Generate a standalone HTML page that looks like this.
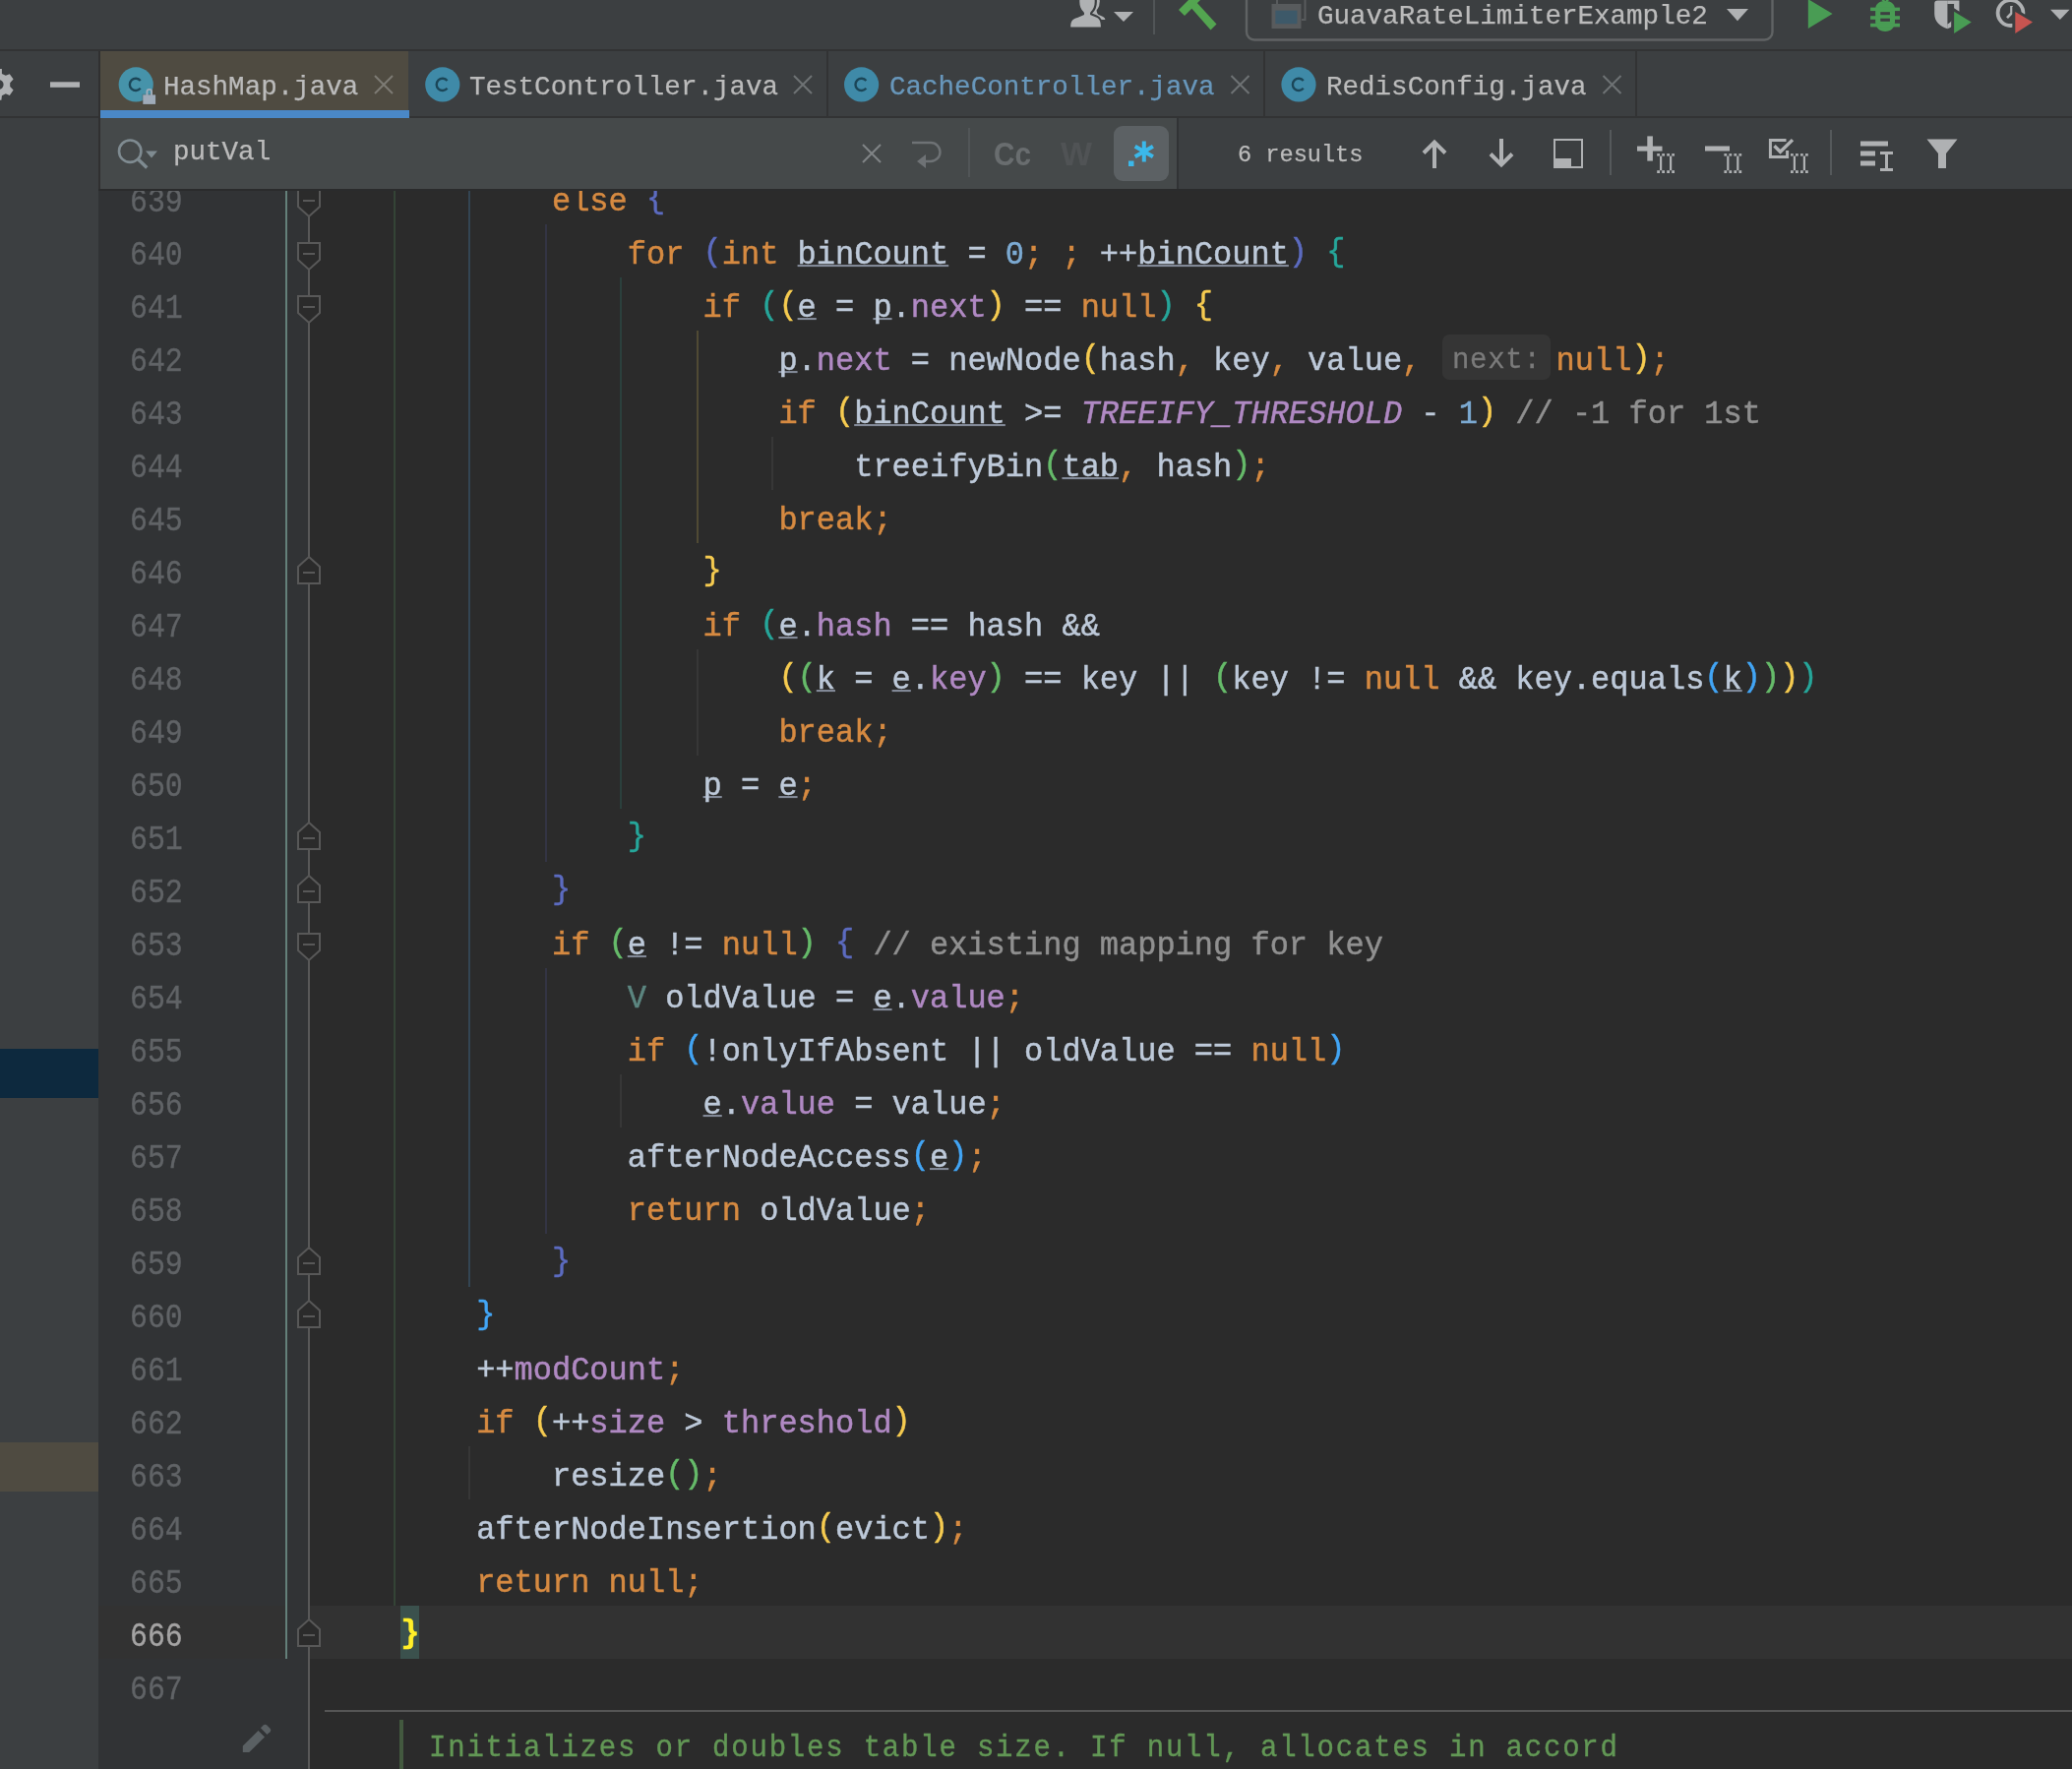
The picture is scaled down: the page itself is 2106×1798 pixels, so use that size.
<!DOCTYPE html>
<html>
<head>
<meta charset="utf-8">
<title>HashMap.java</title>
<style>
html,body{margin:0;padding:0;}
html{width:2106px;height:1798px;overflow:hidden;background:#2b2b2b;}
body{width:2106px;height:1798px;overflow:hidden;background:#2b2b2b;position:relative;font-family:"Liberation Mono",monospace;}
#root{position:absolute;left:0;top:0;width:2106px;height:1798px;overflow:hidden;contain:paint;}
.abs{position:absolute;}
/* ---------- chrome ---------- */
#toolbar{left:0;top:0;width:2106px;height:50px;background:#3c3f41;}
#tb-line{left:0;top:50px;width:2106px;height:2px;background:#323334;}
#tabs{left:0;top:52px;width:2106px;height:66px;background:#3c3f41;}
#tabs-line{left:0;top:118px;width:2106px;height:2px;background:#323334;}
#side{left:0;top:120px;width:100px;height:1678px;background:#3c3f41;}
#side-vline{left:100px;top:52px;width:2px;height:142px;background:#303031;}
#searchrow{left:102px;top:120px;width:2004px;height:72px;background:#3c3f41;}
#searchfield{left:102px;top:120px;width:1094px;height:72px;background:#45494a;}
#search-vline{left:1196px;top:120px;width:2px;height:72px;background:#313335;}
#search-bottom{left:100px;top:192px;width:2006px;height:2px;background:#2a2b2c;}
.tabsep{top:52px;width:2px;height:66px;background:#323334;}
#acttab{left:102px;top:52px;width:313px;height:60px;background:#4f4b41;}
#actline{left:102px;top:112px;width:314px;height:8px;background:#4a88c7;}
.ui{font-family:"Liberation Mono",monospace;font-size:27.55px;white-space:pre;color:#bbbbbb;line-height:30px;height:30px;will-change:transform;-webkit-text-stroke:0.25px;}
/* ---------- editor ---------- */
#gutter{left:100px;top:194px;width:214px;height:1604px;background:#313335;}
#caretrow{left:314px;top:1632px;width:1792px;height:54px;background:#323232;}
#caretgut{left:100px;top:1632px;width:190px;height:54px;background:#323232;}
#tealline{left:290px;top:194px;width:2px;height:1492px;background:#64807a;}
#foldline{left:313px;top:194px;width:2px;height:1604px;background:#585858;}
.guide{position:absolute;width:2px;}
.folds{position:absolute;left:0;top:0;}
#code,#nums{position:absolute;left:0;top:0;width:2106px;height:1798px;}
.ln{position:absolute;left:330.5px;height:54px;line-height:54px;font-size:32px;white-space:pre;color:#bdc9d9;transform-origin:0 35.5px;transform:translateY(5px) scaleY(1.04);-webkit-text-stroke:0.45px;}
.ln>span, .num{display:inline-block;}
.lnin{display:inline-block;}
.num{position:absolute;left:132px;height:54px;line-height:54px;font-size:29.9px;color:#606366;white-space:pre;transform-origin:0 35px;transform:translateY(6px) scaleY(1.17);-webkit-text-stroke:0.3px;}
.num.cur{color:#a4a3a3;}
.k{color:#d68a41}.t{color:#bdc9d9}.f{color:#b089c3}.n{color:#7caad2}.c{color:#909090}
.i{color:#b089c3;font-style:italic}.tp{color:#5c8680}
.u{color:#bdc9d9;text-decoration:underline;text-decoration-color:#838a98;text-decoration-thickness:2px;text-underline-offset:1px;text-decoration-skip-ink:none;}
.b-ind,.b-teal,.b-yel,.b-grn,.b-blu,.b-match{position:relative;top:-3px}
.b-ind{color:#5c6bc0}.b-teal{color:#26a69a}.b-yel{color:#f6cb50}.b-grn{color:#66bb6a}.b-blu{color:#42a5f5}
.b-match{color:#ffef28;font-weight:bold;}
#matchbg{left:407.3px;top:1632px;width:18.7px;height:54px;background:#3b514d;}
.hint{display:inline-block;width:118.1px;height:10px;}
#hintbox{left:1466px;top:340px;width:109.5px;height:45.5px;border-radius:7px;background:#353535;}
#hinttext{left:1475.8px;top:340px;letter-spacing:0.7px;height:54px;line-height:54px;font-size:29px;color:#7a7a7a;white-space:pre;-webkit-text-stroke:0.3px;will-change:transform;}
#docsep{left:330px;top:1738px;width:1776px;height:2px;background:#555555;}
#docbar{left:406px;top:1748px;width:4px;height:50px;background:#43593f;}
#doctext{left:436px;top:1751px;font-size:29px;letter-spacing:1.8px;line-height:54px;height:54px;color:#629755;white-space:pre;-webkit-text-stroke:0.35px;transform-origin:0 35px;transform:scaleY(1.1);}
</style>
</head>
<body>
<div id="root">
<!-- editor -->
<div id="gutter" class="abs"></div>
<div id="caretrow" class="abs"></div>
<div id="caretgut" class="abs"></div>
<div id="matchbg" class="abs"></div>
<div id="tealline" class="abs"></div>
<div id="foldline" class="abs"></div>
<div class="guide" style="left:400px;top:194px;height:1438px;background:#344436"></div>
<div class="guide" style="left:476px;top:194px;height:1114px;background:#334553"></div>
<div class="guide" style="left:554px;top:228px;height:648px;background:#333444"></div>
<div class="guide" style="left:554px;top:984px;height:270px;background:#333444"></div>
<div class="guide" style="left:630px;top:282px;height:540px;background:#2b403d"></div>
<div class="guide" style="left:630px;top:1092px;height:54px;background:#373737"></div>
<div class="guide" style="left:708px;top:336px;height:216px;background:#504a34"></div>
<div class="guide" style="left:708px;top:660px;height:108px;background:#373737"></div>
<div class="guide" style="left:784px;top:444px;height:54px;background:#373737"></div>
<div class="guide" style="left:476px;top:1470px;height:54px;background:#373737"></div>
<svg class="folds" width="2106" height="1798" viewBox="0 0 2106 1798"><g fill="#2b2b2b" stroke="#585858" stroke-width="2"><path d="M303,193 H325 V210 L314,220 L303,210 Z"/><path d="M308,204 H320"/><path d="M303,247 H325 V264 L314,274 L303,264 Z"/><path d="M308,258 H320"/><path d="M303,301 H325 V318 L314,328 L303,318 Z"/><path d="M308,312 H320"/><path d="M303,949 H325 V966 L314,976 L303,966 Z"/><path d="M308,960 H320"/><path d="M314,566 L325,576 V593 H303 V576 Z"/><path d="M308,582 H320"/><path d="M314,836 L325,846 V863 H303 V846 Z"/><path d="M308,852 H320"/><path d="M314,890 L325,900 V917 H303 V900 Z"/><path d="M308,906 H320"/><path d="M314,1268 L325,1278 V1295 H303 V1278 Z"/><path d="M308,1284 H320"/><path d="M314,1322 L325,1332 V1349 H303 V1332 Z"/><path d="M308,1338 H320"/><path d="M314,1646 L325,1656 V1673 H303 V1656 Z"/><path d="M308,1662 H320"/></g></svg>
<div id="hintbox" class="abs"></div>
<div id="hinttext" class="abs">next:</div>
<div id="nums">
<div class="num" style="top:174px">639</div>
<div class="num" style="top:228px">640</div>
<div class="num" style="top:282px">641</div>
<div class="num" style="top:336px">642</div>
<div class="num" style="top:390px">643</div>
<div class="num" style="top:444px">644</div>
<div class="num" style="top:498px">645</div>
<div class="num" style="top:552px">646</div>
<div class="num" style="top:606px">647</div>
<div class="num" style="top:660px">648</div>
<div class="num" style="top:714px">649</div>
<div class="num" style="top:768px">650</div>
<div class="num" style="top:822px">651</div>
<div class="num" style="top:876px">652</div>
<div class="num" style="top:930px">653</div>
<div class="num" style="top:984px">654</div>
<div class="num" style="top:1038px">655</div>
<div class="num" style="top:1092px">656</div>
<div class="num" style="top:1146px">657</div>
<div class="num" style="top:1200px">658</div>
<div class="num" style="top:1254px">659</div>
<div class="num" style="top:1308px">660</div>
<div class="num" style="top:1362px">661</div>
<div class="num" style="top:1416px">662</div>
<div class="num" style="top:1470px">663</div>
<div class="num" style="top:1524px">664</div>
<div class="num" style="top:1578px">665</div>
<div class="num cur" style="top:1632px">666</div>
<div class="num" style="top:1686px">667</div>
</div>
<div id="code">
<div class="ln" style="top:174px">            <span class="k">else</span><span class="t"> </span><span class="b-ind">{</span></div>
<div class="ln" style="top:228px">                <span class="k">for</span><span class="t"> </span><span class="b-ind">(</span><span class="k">int</span><span class="t"> </span><span class="u">binCount</span><span class="t"> = </span><span class="n">0</span><span class="k">;</span><span class="t"> </span><span class="k">;</span><span class="t"> ++</span><span class="u">binCount</span><span class="b-ind">)</span><span class="t"> </span><span class="b-teal">{</span></div>
<div class="ln" style="top:282px">                    <span class="k">if</span><span class="t"> </span><span class="b-teal">(</span><span class="b-yel">(</span><span class="u">e</span><span class="t"> = </span><span class="u">p</span><span class="t">.</span><span class="f">next</span><span class="b-yel">)</span><span class="t"> == </span><span class="k">null</span><span class="b-teal">)</span><span class="t"> </span><span class="b-yel">{</span></div>
<div class="ln" style="top:336px">                        <span class="u">p</span><span class="t">.</span><span class="f">next</span><span class="t"> = newNode</span><span class="b-yel">(</span><span class="t">hash</span><span class="k">,</span><span class="t"> key</span><span class="k">,</span><span class="t"> value</span><span class="k">,</span><span class="t"> </span><span class="hint"></span><span class="k">null</span><span class="b-yel">)</span><span class="k">;</span></div>
<div class="ln" style="top:390px">                        <span class="k">if</span><span class="t"> </span><span class="b-yel">(</span><span class="u">binCount</span><span class="t"> &gt;= </span><span class="i">TREEIFY_THRESHOLD</span><span class="t"> - </span><span class="n">1</span><span class="b-yel">)</span><span class="t"> </span><span class="c">// -1 for 1st</span></div>
<div class="ln" style="top:444px">                            <span class="t">treeifyBin</span><span class="b-grn">(</span><span class="u">tab</span><span class="k">,</span><span class="t"> hash</span><span class="b-grn">)</span><span class="k">;</span></div>
<div class="ln" style="top:498px">                        <span class="k">break</span><span class="k">;</span></div>
<div class="ln" style="top:552px">                    <span class="b-yel">}</span></div>
<div class="ln" style="top:606px">                    <span class="k">if</span><span class="t"> </span><span class="b-teal">(</span><span class="u">e</span><span class="t">.</span><span class="f">hash</span><span class="t"> == hash &amp;&amp;</span></div>
<div class="ln" style="top:660px">                        <span class="b-yel">(</span><span class="b-grn">(</span><span class="u">k</span><span class="t"> = </span><span class="u">e</span><span class="t">.</span><span class="f">key</span><span class="b-grn">)</span><span class="t"> == key || </span><span class="b-grn">(</span><span class="t">key != </span><span class="k">null</span><span class="t"> &amp;&amp; key.equals</span><span class="b-blu">(</span><span class="u">k</span><span class="b-blu">)</span><span class="b-grn">)</span><span class="b-yel">)</span><span class="b-teal">)</span></div>
<div class="ln" style="top:714px">                        <span class="k">break</span><span class="k">;</span></div>
<div class="ln" style="top:768px">                    <span class="u">p</span><span class="t"> = </span><span class="u">e</span><span class="k">;</span></div>
<div class="ln" style="top:822px">                <span class="b-teal">}</span></div>
<div class="ln" style="top:876px">            <span class="b-ind">}</span></div>
<div class="ln" style="top:930px">            <span class="k">if</span><span class="t"> </span><span class="b-grn">(</span><span class="u">e</span><span class="t"> != </span><span class="k">null</span><span class="b-grn">)</span><span class="t"> </span><span class="b-ind">{</span><span class="t"> </span><span class="c">// existing mapping for key</span></div>
<div class="ln" style="top:984px">                <span class="tp">V</span><span class="t"> oldValue = </span><span class="u">e</span><span class="t">.</span><span class="f">value</span><span class="k">;</span></div>
<div class="ln" style="top:1038px">                <span class="k">if</span><span class="t"> </span><span class="b-blu">(</span><span class="t">!onlyIfAbsent || oldValue == </span><span class="k">null</span><span class="b-blu">)</span></div>
<div class="ln" style="top:1092px">                    <span class="u">e</span><span class="t">.</span><span class="f">value</span><span class="t"> = value</span><span class="k">;</span></div>
<div class="ln" style="top:1146px">                <span class="t">afterNodeAccess</span><span class="b-blu">(</span><span class="u">e</span><span class="b-blu">)</span><span class="k">;</span></div>
<div class="ln" style="top:1200px">                <span class="k">return</span><span class="t"> oldValue</span><span class="k">;</span></div>
<div class="ln" style="top:1254px">            <span class="b-ind">}</span></div>
<div class="ln" style="top:1308px">        <span class="b-blu">}</span></div>
<div class="ln" style="top:1362px">        <span class="t">++</span><span class="f">modCount</span><span class="k">;</span></div>
<div class="ln" style="top:1416px">        <span class="k">if</span><span class="t"> </span><span class="b-yel">(</span><span class="t">++</span><span class="f">size</span><span class="t"> &gt; </span><span class="f">threshold</span><span class="b-yel">)</span></div>
<div class="ln" style="top:1470px">            <span class="t">resize</span><span class="b-grn">(</span><span class="b-grn">)</span><span class="k">;</span></div>
<div class="ln" style="top:1524px">        <span class="t">afterNodeInsertion</span><span class="b-yel">(</span><span class="t">evict</span><span class="b-yel">)</span><span class="k">;</span></div>
<div class="ln" style="top:1578px">        <span class="k">return</span><span class="t"> </span><span class="k">null</span><span class="k">;</span></div>
<div class="ln" style="top:1632px">    <span class="b-match">}</span></div>
<div class="ln" style="top:1686px"></div>
</div>
<div id="docsep" class="abs"></div>
<div id="docbar" class="abs"></div>
<svg class="abs" style="left:240px;top:1745px" width="44" height="44" viewBox="240 1745 44 44"><g fill="#5a6063"><path d="M246.8,1774.6 L262.5,1759 L269,1765.5 L253.3,1781 L246.8,1781 Z"/><path d="M264.9,1756.3 L267.7,1753.5 a2.500,2.500 0 0 1 3.500,0 L274.500,1756.8 a2.500,2.500 0 0 1 0,3.500 L271.4,1763.1 Z"/></g></svg>
<div id="doctext" class="abs">Initializes or doubles table size. If null, allocates in accord</div>

<!-- chrome backgrounds -->
<div id="toolbar" class="abs"></div>
<div id="tb-line" class="abs"></div>
<div id="tabs" class="abs"></div>
<div id="tabs-line" class="abs"></div>
<div id="side" class="abs"></div>
<div id="searchrow" class="abs"></div>
<div id="searchfield" class="abs"></div>
<div id="search-vline" class="abs"></div>
<div id="side-vline" class="abs"></div>
<div id="acttab" class="abs"></div>
<div id="actline" class="abs"></div>
<div class="abs tabsep" style="left:840px"></div>
<div class="abs tabsep" style="left:1284px"></div>
<div class="abs tabsep" style="left:1662px"></div>
<div class="abs" style="left:0;top:1066px;width:100px;height:50px;background:#0d293e"></div>
<div class="abs" style="left:0;top:1466px;width:100px;height:50px;background:#4f4b41"></div>

<div id="search-bottom" class="abs"></div>
<!-- search bar overlay (covers top of line 639) -->
<div id="overlay" class="abs" style="left:0;top:0;width:2106px;height:194px;overflow:hidden;pointer-events:none">
<svg class="abs" style="left:0;top:0" width="2106" height="194" viewBox="0 0 2106 194">
<!-- ===== top toolbar icons ===== -->
<g id="users">
  <g fill="#afb1b3">
    <ellipse cx="1110.500" cy="1.500" rx="7.300" ry="10.500"/>
    <path d="M1108,9 L1114.500,9 C1114.500,14 1116,15 1119,16 C1122.500,17.300 1123.300,18.500 1123.300,20 L1108,20 Z"/>
  </g>
  <g fill="#afb1b3" stroke="#3c3f41" stroke-width="4.400" paint-order="stroke">
    <path d="M1088.200,27.600 C1088.200,21.500 1090,19.500 1095,18 L1101.500,15.300 C1102.300,14.500 1102.300,13.500 1101.500,12.200 C1098.500,9.500 1097.300,6 1097.300,1.500 C1097.300,-5 1100.500,-9 1105,-9 C1109.500,-9 1112.700,-5 1112.700,1.500 C1112.700,6 1111.500,9.500 1108.500,12.200 C1107.700,13.500 1107.700,14.500 1108.500,15.300 L1114,17.500 C1117.500,19 1118.900,21.500 1118.900,27.600 Z"/>
  </g>
</g>
<path d="M1132,12 h20 l-10,10 z" fill="#afb1b3"/>
<rect x="1172" y="0" width="2" height="35" fill="#515557"/>
<g id="hammer" fill="#53a550">
  <path d="M1198,10 L1215,-7 L1221,-1 L1204,16 Z"/>
  <path d="M1209,6 L1214.500,0.500 L1236.500,24.500 L1230.500,30.500 Z"/>
</g>
<!-- run config box -->
<rect x="1267" y="-10" width="534.500" height="50.500" rx="8" ry="8" fill="none" stroke="#606364" stroke-width="2.400"/>
<g id="winicon">
  <path d="M1298,4 V-3 H1326.500 V20 H1323" fill="none" stroke="#585b5d" stroke-width="2"/>
  <rect x="1292.500" y="4" width="30" height="25" fill="#585b5d"/>
  <rect x="1296.400" y="10.700" width="22" height="13.500" fill="#3d5969"/>
</g>
<path d="M1755,8.900 h22 l-11,12.400 z" fill="#afb1b3"/>
<!-- run -->
<path d="M1837.800,-0.900 L1862.600,14 L1837.800,28.900 Z" fill="#499c54"/>
<!-- debug bug -->
<g id="bug" fill="#499c54">
  <path d="M1906.200,9.500 C1906.200,4 1910,1 1916.100,1 C1922.200,1 1926,4 1926,9.500 V22 C1926,28 1922,32 1916.100,32 C1910.200,32 1906.200,28 1906.200,22 Z"/>
  <rect x="1901.100" y="7.600" width="29.900" height="3.500"/>
  <rect x="1901.100" y="16.200" width="29.900" height="3.600"/>
  <rect x="1901.100" y="23.800" width="29.900" height="3.600"/>
  <path d="M1910.800,-2 l2.800,0 l2.600,3 l2.600,-3 l2.800,0 l-4,5 h-2.800 z"/>
</g>
<g fill="#3c3f41"><rect x="1911.300" y="12.200" width="9.600" height="3"/><rect x="1911.300" y="18.700" width="9.600" height="3.100"/></g>
<!-- coverage -->
<g id="cov">
  <path d="M1979.400,0.400 H1969.500 a3.300,3.300 0 0 0 -3.300,3.300 V14 C1966.200,22 1972,27 1979.400,29.300 Z" fill="#afb1b3"/>
  <path d="M1979.300,0.400 H1991.400 V14 C1991.400,22 1986,27 1979.300,29.300 Z M1979.300,4.100 H1986.100 V14 C1986.100,19 1983.500,22.500 1979.300,24.500 Z" fill="#afb1b3" fill-rule="evenodd"/>
  <path d="M1983.200,6.500 L2009,22.500 L1983.200,39 Z" fill="#3c3f41"/>
  <path d="M1986.100,11.700 L2003.800,22.500 L1986.100,33.900 Z" fill="#499c54"/>
</g>
<!-- profiler -->
<g id="prof">
  <circle cx="2043.500" cy="13.100" r="12.900" fill="none" stroke="#afb1b3" stroke-width="3.800"/>
  <path d="M2044.500,6 V13.400 L2040,18.200" fill="none" stroke="#afb1b3" stroke-width="2.700"/>
  <path d="M2045.400,6.800 L2071,22.600 L2045.400,39 Z" fill="#3c3f41"/>
  <path d="M2048.300,12 L2066,22.600 L2048.300,33.900 Z" fill="#c75450"/>
</g>
<path d="M2084,9.800 h19.600 l-9.800,10.200 z" fill="#afb1b3"/>

<!-- ===== left header ===== -->
<g id="gear" fill="#afb1b3">
  <path d="M-3,70 L1.9,70 L1.9,75 L5.8,76.7 L9.8,75.2 L13.6,80.4 L10.2,84.2 L10.2,87.9 L13.6,91.6 L9.8,96.9 L5.8,95.3 L1.9,97.2 L1.4,101.8 L-3,101.8 Z M-1.2,81.2 a4.8,4.8 0 0 1 0,9.6 a4.8,4.8 0 0 1 0,-9.6 z" fill-rule="evenodd"/>
</g>
<rect x="51" y="83.3" width="30" height="5.5" fill="#afb1b3"/>

<!-- ===== tab icons ===== -->
<g id="cicons">
  <circle cx="138.200" cy="85.950" r="17.600" fill="#4693aa"/>
  <circle cx="449.800" cy="85.900" r="17.600" fill="#3f8aa8"/>
  <circle cx="875.600" cy="85.900" r="17.600" fill="#3f8aa8"/>
  <circle cx="1320" cy="85.900" r="17.600" fill="#3f8aa8"/>
  <g fill="none" stroke="#1b4658" stroke-width="2.400">
    <path d="M142.71,81.95 a6.15,6.15 0 1 0 0,7.9"/>
    <path d="M454.56,81.95 a6.15,6.15 0 1 0 0,7.9"/>
    <path d="M880.36,81.95 a6.15,6.15 0 1 0 0,7.9"/>
    <path d="M1324.76,81.95 a6.15,6.15 0 1 0 0,7.9"/>
  </g>
  <!-- lock -->
  <rect x="144.600" y="95.700" width="14.200" height="10.900" fill="#4a4a44" opacity="0.5"/>
  <path d="M149.450,97 v-3.800 a2.300,2.300 0 0 1 4.600,0 v3.800" fill="none" stroke="#a2aebb" stroke-width="1.900"/>
  <rect x="145.300" y="96.400" width="12.800" height="9.500" fill="#9fabb9"/>
</g>
<!-- tab close X -->
<g stroke="#7d7b74" stroke-width="2" fill="none">
  <path d="M381,77 l18,18 M399,77 l-18,18"/>
</g>
<g stroke="#6e7274" stroke-width="2" fill="none">
  <path d="M807,77 l18,18 M825,77 l-18,18"/>
  <path d="M1251.5,77 l18,18 M1269.5,77 l-18,18"/>
  <path d="M1629.5,77 l18,18 M1647.5,77 l-18,18"/>
</g>

<!-- ===== search field ===== -->
<g fill="none" stroke="#7f8b91" stroke-width="2.6">
  <circle cx="132.2" cy="153.7" r="11.2"/>
  <path d="M140.500,162 L149.300,170.500" stroke-width="3.400"/>
</g>
<path d="M148,153.5 h12 l-6,7 z" fill="#7f8b91"/>
<g stroke="#808486" stroke-width="2" fill="none"><path d="M877,147 l18,18 M895,147 l-18,18"/></g>
<!-- newline icon -->
<g fill="none" stroke="#6e7275" stroke-width="2.4">
  <path d="M927,145 H946 a9.5,9.5 0 0 1 0,19 H940"/>
</g>
<path d="M941,157 v14 l-9,-7 z" fill="#6e7275"/>
<rect x="984" y="130" width="2" height="50" fill="#515557"/>
<!-- Cc / W -->
<text x="1010" y="168" font-family="Liberation Sans, sans-serif" font-weight="bold" font-size="33" fill="#696d6f" textLength="38" lengthAdjust="spacingAndGlyphs">Cc</text>
<text x="1078" y="168" font-family="Liberation Sans, sans-serif" font-weight="bold" font-size="33" fill="#505355" textLength="32" lengthAdjust="spacingAndGlyphs">W</text>
<!-- regex -->
<rect x="1132" y="128" width="56" height="56" rx="9" ry="9" fill="#5c6164"/>
<rect x="1147" y="163.5" width="5.5" height="5.5" fill="#3bb8ea"/>
<g stroke="#3bb8ea" stroke-width="4" fill="none">
  <path d="M1162.8,143.5 v21 M1153.7,148.7 l18.2,10.6 M1171.9,148.7 l-18.2,10.6"/>
</g>

<!-- ===== search toolbar right ===== -->
<g fill="none" stroke="#afb1b3" stroke-width="4">
  <path d="M1458,171 V145 M1447,155.5 L1458,144.5 L1469,155.5"/>
  <path d="M1526,141 V167 M1515,156.5 L1526,167.5 L1537,156.5"/>
</g>
<rect x="1580" y="142" width="28" height="28" fill="none" stroke="#afb1b3" stroke-width="2"/>
<rect x="1579" y="161" width="18" height="10" fill="#afb1b3"/>
<rect x="1636" y="132" width="2" height="46" fill="#55595b"/>
<!-- plus II -->
<g fill="#afb1b3">
  <rect x="1664" y="148.600" width="25.500" height="5"/><rect x="1674.300" y="138.400" width="5.600" height="25.200"/>
  <rect x="1733" y="148.5" width="25" height="5"/>
</g>
<g id="II" fill="#afb1b3">
<rect x="1684.2" y="156.1" width="2.8" height="2.5"/><rect x="1689.2" y="156.1" width="2.8" height="2.5"/><rect x="1687.0" y="158.6" width="2.2" height="14.6"/><rect x="1684.2" y="173.2" width="2.8" height="2.8"/><rect x="1689.2" y="173.2" width="2.8" height="2.8"/><rect x="1694.2" y="156.1" width="2.8" height="2.5"/><rect x="1699.2" y="156.1" width="2.8" height="2.5"/><rect x="1697.0" y="158.6" width="2.2" height="14.6"/><rect x="1694.2" y="173.2" width="2.8" height="2.8"/><rect x="1699.2" y="173.2" width="2.8" height="2.8"/>
<rect x="1752.4" y="156.1" width="2.8" height="2.5"/><rect x="1757.4" y="156.1" width="2.8" height="2.5"/><rect x="1755.2" y="158.6" width="2.2" height="14.6"/><rect x="1752.4" y="173.2" width="2.8" height="2.8"/><rect x="1757.4" y="173.2" width="2.8" height="2.8"/><rect x="1762.4" y="156.1" width="2.8" height="2.5"/><rect x="1767.4" y="156.1" width="2.8" height="2.5"/><rect x="1765.2" y="158.6" width="2.2" height="14.6"/><rect x="1762.4" y="173.2" width="2.8" height="2.8"/><rect x="1767.4" y="173.2" width="2.8" height="2.8"/>
<rect x="1820.0" y="156.1" width="2.8" height="2.5"/><rect x="1825.0" y="156.1" width="2.8" height="2.5"/><rect x="1822.8" y="158.6" width="2.2" height="14.6"/><rect x="1820.0" y="173.2" width="2.8" height="2.8"/><rect x="1825.0" y="173.2" width="2.8" height="2.8"/><rect x="1830.0" y="156.1" width="2.8" height="2.5"/><rect x="1835.0" y="156.1" width="2.8" height="2.5"/><rect x="1832.8" y="158.6" width="2.2" height="14.6"/><rect x="1830.0" y="173.2" width="2.8" height="2.8"/><rect x="1835.0" y="173.2" width="2.8" height="2.8"/>
</g>
<!-- check box -->
<path d="M1815.500,142.400 H1799.400 V159.600 H1816.600 V153" fill="none" stroke="#afb1b3" stroke-width="3"/>
<path d="M1803.500,148.200 L1809.500,154.300 L1822,142.100" fill="none" stroke="#afb1b3" stroke-width="3.400"/>
<rect x="1860" y="132" width="2" height="46" fill="#55595b"/>
<!-- lines I -->
<g fill="#afb1b3">
  <rect x="1891" y="143.5" width="28" height="5"/>
  <rect x="1891" y="153.5" width="15" height="5"/>
  <rect x="1891" y="163.5" width="15" height="5"/>
  <rect x="1916" y="155" width="3" height="18"/>
  <rect x="1911" y="154" width="13" height="3"/>
  <rect x="1911" y="171" width="13" height="3"/>
</g>
<!-- filter -->
<path d="M1958.5,141.5 H1989.5 L1978,156 V171 H1970 V156 Z" fill="#afb1b3"/>
</svg>
<div class="abs ui" style="left:1338.5px;top:2px;" id="t-run">GuavaRateLimiterExample2</div>
<div class="abs ui" style="left:166.3px;top:74px;" id="t-tab1">HashMap.java</div>
<div class="abs ui" style="left:476.5px;top:74px;" id="t-tab2">TestController.java</div>
<div class="abs ui" style="left:903.5px;top:74px;color:#6897bb" id="t-tab3">CacheController.java</div>
<div class="abs ui" style="left:1348.3px;top:74px;" id="t-tab4">RedisConfig.java</div>
<div class="abs ui" style="left:176px;top:140px;" id="t-search">putVal</div>
<div class="abs ui" style="left:1258.2px;top:143px;font-size:23.6px;" id="t-res">6 results</div>

</div>
</div>
</body>
</html>
